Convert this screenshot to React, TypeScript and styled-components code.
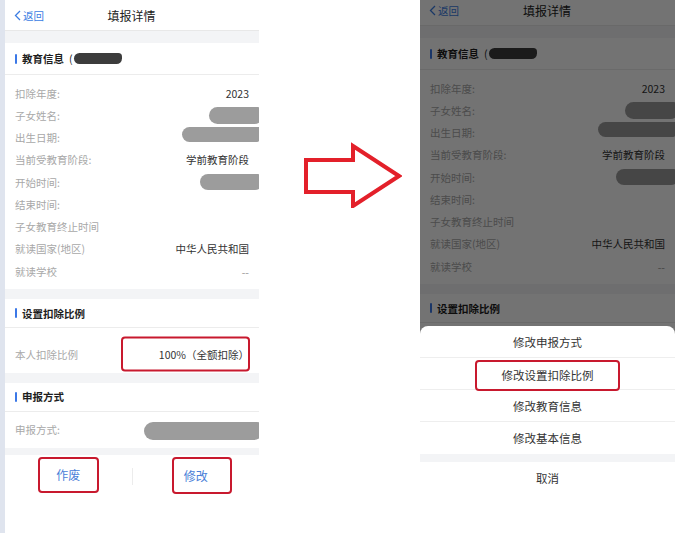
import styled, { createGlobalStyle } from 'styled-components'

const GlobalStyle = createGlobalStyle`
  html, body {
    margin: 0;
    padding: 0;
    background: #fff;
  }
  body {
    font-family: "Noto Sans CJK SC", "Noto Sans", sans-serif;
    overflow: hidden;
  }
`

const Page = styled.div`
  display: flex;
  align-items: flex-start;
  width: 675px;
  height: 533px;
  overflow: hidden;
`

const Phone = styled.div<{ $framed?: boolean }>`
  position: relative;
  flex-shrink: 0;
  width: ${(p) => (p.$framed ? '254px' : '255px')};
  height: 533px;
  overflow: hidden;
  background: #fff;
  border-left: ${(p) => (p.$framed ? '5px solid #dfe4ee' : 'none')};
`

const NavBar = styled.div<{ $height: number }>`
  display: grid;
  grid-template-columns: 1fr auto 1fr;
  align-items: center;
  height: ${(p) => p.$height}px;
  padding: 0 10px ${(p) => (p.$height < 30 ? 4 : 0)}px 9px;
  box-sizing: border-box;
  border-bottom: 1px solid #e8e8e8;
  background: #fff;
`

const Back = styled.div`
  display: flex;
  align-items: center;
  gap: 2px;
  font-size: 10.5px;
  color: #3b7de3;
`

const Title = styled.div`
  font-size: 12px;
  color: #222;
`

const Gap = styled.div<{ $h: number }>`
  height: ${(p) => p.$h}px;
  background: #f3f4f6;
`

const SectionHeader = styled.div<{ $h: number }>`
  display: flex;
  align-items: center;
  gap: 5px;
  height: ${(p) => p.$h}px;
  padding: 0 10px;
  border-bottom: 1px solid #ececec;
  font-size: 10.5px;
  font-weight: 700;
  color: #1e1e1e;
`

const Bar = styled.span`
  width: 2px;
  height: 10px;
  border-radius: 1px;
  background: #3b78e7;
`

const Rows = styled.div<{ $pt: number; $pb: number }>`
  padding: ${(p) => p.$pt}px 10px ${(p) => p.$pb}px;
`

const Row = styled.div`
  position: relative;
  display: flex;
  align-items: center;
  justify-content: space-between;
  height: 22.25px;
  font-size: 10.5px;
`

const Label = styled.span`
  color: #a8a8a8;
  white-space: nowrap;
`

const Value = styled.span<{ $muted?: boolean }>`
  color: ${(p) => (p.$muted ? '#999' : '#333')};
  white-space: nowrap;
`

const Redact = styled.span<{ $w: number; $h: number; $dy?: number; $dark?: boolean; $mr?: number }>`
  display: inline-block;
  width: ${(p) => p.$w}px;
  height: ${(p) => p.$h}px;
  margin-right: ${(p) => p.$mr ?? -14}px;
  border-radius: ${(p) => p.$h / 2}px ${(p) => p.$h / 3}px ${(p) => p.$h / 2}px ${(p) => p.$h / 2}px;
  background: ${(p) => (p.$dark ? '#3c3c3c' : '#9c9c9c')};
  transform: translateY(${(p) => p.$dy ?? 0}px);
`

const Paren = styled.span`
  font-weight: 400;
  margin-right: -4px;
`

const Mark = styled.span<{ $w: number; $h: number }>`
  position: absolute;
  right: -1px;
  top: 50%;
  width: ${(p) => p.$w}px;
  height: ${(p) => p.$h}px;
  transform: translateY(-50%);
  border: 2px solid #c8192e;
  border-radius: 4px;
  box-sizing: border-box;
`

const ActionBar = styled.div`
  display: flex;
  align-items: flex-start;
  padding-top: 2px;
`

const ActionCell = styled.div`
  flex: 1;
  display: flex;
  justify-content: center;
`

const Divider = styled.div`
  width: 1px;
  height: 17px;
  margin-top: 11px;
  background: #ececec;
`

const ActionButton = styled.div<{ $w: number; $h: number; $nudge?: number }>`
  display: flex;
  align-items: center;
  justify-content: center;
  width: ${(p) => p.$w}px;
  height: ${(p) => p.$h}px;
  margin-left: ${(p) => (p.$nudge ?? 0) * 2}px;
  padding-right: ${(p) => (p.$nudge ?? 0) * 2}px;
  border: 2px solid #c8192e;
  border-radius: 4px;
  box-sizing: border-box;
  font-size: 12px;
  color: #4a80d8;
`

const ArrowColumn = styled.div`
  flex-shrink: 0;
  width: 161px;
  padding: 142px 0 0 43px;
  box-sizing: border-box;
`

const Mask = styled.div`
  position: absolute;
  inset: 0;
  background: rgba(0, 0, 0, 0.55);
`

const Sheet = styled.div`
  position: absolute;
  left: 0;
  right: 0;
  bottom: 0;
  height: 207px;
  border-radius: 8px 8px 0 0;
  background: #fff;
`

const SheetItem = styled.div<{ $last?: boolean }>`
  display: flex;
  align-items: center;
  justify-content: center;
  height: 32px;
  box-sizing: border-box;
  border-bottom: ${(p) => (p.$last ? 'none' : '1px solid #eeeeee')};
  font-size: 11.5px;
  color: #333;
`

const Boxed = styled.span`
  display: flex;
  align-items: center;
  justify-content: center;
  width: 145px;
  height: 31px;
  margin-top: 3px;
  border: 2px solid #c8192e;
  border-radius: 4px;
  box-sizing: border-box;
`

type Item = {
  label: string
  value?: string
  muted?: boolean
  redact?: { w: number; h: number; dy?: number; mr?: number }
}

const eduRows: Item[] = [
  { label: '扣除年度:', value: '2023' },
  { label: '子女姓名:', redact: { w: 54, h: 17 } },
  { label: '出生日期:', redact: { w: 81, h: 15, dy: -3 } },
  { label: '当前受教育阶段:', value: '学前教育阶段' },
  { label: '开始时间:', redact: { w: 63, h: 16 } },
  { label: '结束时间:' },
  { label: '子女教育终止时间' },
  { label: '就读国家(地区)', value: '中华人民共和国' },
  { label: '就读学校', value: '--', muted: true },
]

const BackChevron = () => (
  <svg width="7" height="11" viewBox="0 0 7 11">
    <polyline points="6,1 1.5,5.5 6,10" fill="none" stroke="#3b7de3" strokeWidth="1.3" />
  </svg>
)

const Arrow = () => (
  <svg width="100" height="66" viewBox="300 140 100 66">
    <polygon
      points="304,158 351,158 351,144 397,174 351,204 351,190 304,190"
      fill="#fff"
      stroke="#e3202a"
      strokeWidth="4"
      strokeLinejoin="miter"
    />
  </svg>
)

const RowView = ({ item }: { item: Item }) => (
  <Row>
    <Label>{item.label}</Label>
    {item.value && <Value $muted={item.muted}>{item.value}</Value>}
    {item.redact && (
      <Redact $w={item.redact.w} $h={item.redact.h} $dy={item.redact.dy} $mr={item.redact.mr} />
    )}
  </Row>
)

const Detail = ({ navHeight, marked }: { navHeight: number; marked?: boolean }) => (
  <>
    <NavBar $height={navHeight}>
      <Back>
        <BackChevron />
        返回
      </Back>
      <Title>填报详情</Title>
      <span />
    </NavBar>
    <Gap $h={12} />
    <SectionHeader $h={31}>
      <Bar />
      教育信息
      <Paren>(</Paren>
      <Redact $w={48} $h={11} $dark $mr={0} />
    </SectionHeader>
    <Rows $pt={7} $pb={7}>
      {eduRows.map((item) => (
        <RowView key={item.label} item={item} />
      ))}
    </Rows>
    <Gap $h={10} />
    <SectionHeader $h={28}>
      <Bar />
      设置扣除比例
    </SectionHeader>
    <Rows $pt={15} $pb={7}>
      <Row>
        <Label>本人扣除比例</Label>
        <Value>100%（全额扣除）</Value>
        {marked && <Mark $w={129} $h={35} />}
      </Row>
    </Rows>
    <Gap $h={10} />
    <SectionHeader $h={28}>
      <Bar />
      申报方式
    </SectionHeader>
    <Rows $pt={7} $pb={7}>
      <Row>
        <Label>申报方式:</Label>
        <Redact $w={119} $h={18} $dy={1} />
      </Row>
    </Rows>
    <Gap $h={7} />
  </>
)

export default function App() {
  return (
    <>
      <GlobalStyle />
      <Page>
        <Phone $framed>
          <Detail navHeight={31} marked />
          <ActionBar>
            <ActionCell>
              <ActionButton $w={61} $h={36}>作废</ActionButton>
            </ActionCell>
            <Divider />
            <ActionCell>
              <ActionButton $w={60} $h={37} $nudge={6}>修改</ActionButton>
            </ActionCell>
          </ActionBar>
        </Phone>
        <ArrowColumn>
          <Arrow />
        </ArrowColumn>
        <Phone>
          <Detail navHeight={26} />
          <Mask />
          <Sheet>
            <SheetItem>修改申报方式</SheetItem>
            <SheetItem>
              <Boxed>修改设置扣除比例</Boxed>
            </SheetItem>
            <SheetItem>修改教育信息</SheetItem>
            <SheetItem $last>修改基本信息</SheetItem>
            <Gap $h={8} />
            <SheetItem $last>取消</SheetItem>
          </Sheet>
        </Phone>
      </Page>
    </>
  )
}
